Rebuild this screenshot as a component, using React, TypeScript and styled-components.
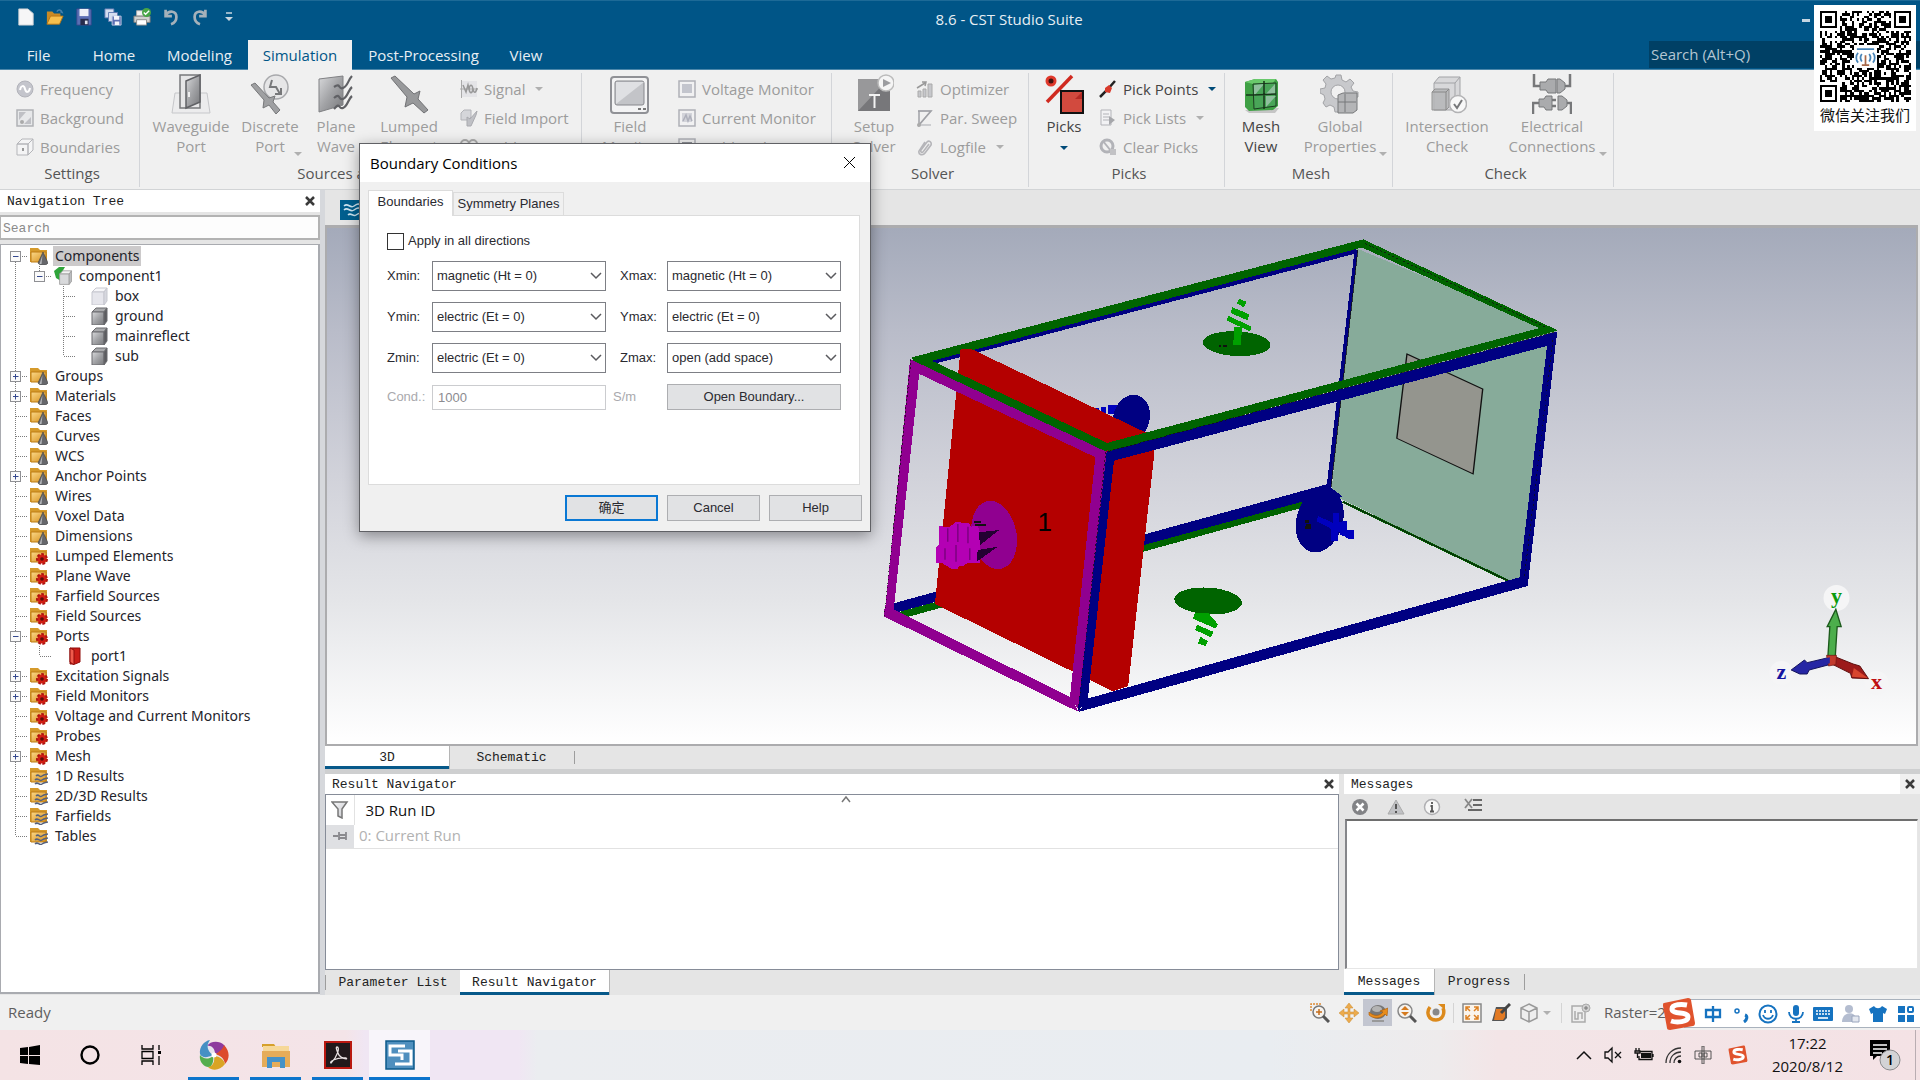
import React from "react";
import styled, { createGlobalStyle, css } from "styled-components";

/* ---------- tokens ---------- */

const ui = `"Open Sans", "Noto Sans", "Noto Sans CJK SC", sans-serif`;
const treeFont = `"Noto Sans", "Open Sans", sans-serif`;
const dialogFont = `"Liberation Sans", "Noto Sans CJK SC", sans-serif`;
const mono = `"Liberation Mono", "DejaVu Sans Mono", monospace`;
const blue = "#005587";

const GlobalStyle = createGlobalStyle`
  *, *::before, *::after { box-sizing: border-box; }
  body { margin: 0; background: #f0f0f0; overflow: hidden; }
  button, input, select { font: inherit; color: inherit; margin: 0; }
  button { padding: 0; border: 0; background: none; cursor: default; }
  svg { display: block; flex: none; }
`;

const Page = styled.div`
  position: relative;
  display: flex;
  flex-direction: column;
  height: 100vh;
  font-family: ${ui};
  font-size: 15px;
  color: #333;
`;

/* ---------- title bar and tabs ---------- */

const TitleBar = styled.header`
  background: ${blue};
  border-top: 1px solid #1d6a97;
  height: 70px;
  color: #e8eff4;
  display: flex;
  flex-direction: column;
`;
const TitleRow = styled.div`
  display: flex;
  align-items: center;
  height: 39px;
  padding: 0 110px 0 16px;
`;
const QuickAccess = styled.div`
  display: flex;
  align-items: center;
  gap: 9px;
  width: 224px;
  height: 32px;
  align-self: start;
`;
const QuickButton = styled.button`
  display: flex;
  justify-content: center;
  width: 20px;
`;
const AppTitle = styled.h1`
  flex: 1;
  margin: 0;
  padding-bottom: 3px;
  text-align: center;
  font-size: 15px;
  font-weight: 400;
  line-height: 20px;
`;
const MinimizeButton = styled.button`
  width: 8px;
  height: 3px;
  margin-left: 24px;
  background: #c5d6e2;
`;
const TabRow = styled.nav`
  display: flex;
  align-items: stretch;
  height: 30px;
  border-bottom: 1px solid #4b87aa;
`;
const RibbonTab = styled.button<{ $w: number; $active?: boolean }>`
  width: ${(p) => p.$w}px;
  line-height: 29px;
  height: 30px;
  ${(p) => p.$active && css`background: #f0f0f0; color: ${blue};`}
`;
const TabSpacer = styled.div`
  flex: 1;
`;
const RibbonSearch = styled.input`
  width: 271px;
  height: 27px;
  margin-top: 1px;
  border: 0;
  padding: 0 2px 2px;
  background: #004065;
  color: #c8d6df;
  outline: 0;
  &::placeholder { color: #b4c6d2; opacity: 1; }
`;

/* ---------- ribbon ---------- */

const Ribbon = styled.section`
  display: flex;
  height: 120px;
  padding-top: 3px;
  background: #f0f0f0;
  border-bottom: 1px solid #d2d4d6;
`;
const Group = styled.div<{ $w: number }>`
  position: relative;
  display: flex;
  flex-direction: column;
  width: ${(p) => p.$w}px;
  height: 114px;
  border-right: 1px solid #d3d5d9;
`;
const GroupBody = styled.div`
  display: flex;
  height: 90px;
  padding: 1px 0 0 8px;
`;
const GroupLabel = styled.div`
  padding-left: 5px;
  text-align: center;
  line-height: 20px;
  color: #555;
`;
const BigButton = styled.button<{ $w: number; $on?: boolean }>`
  position: relative;
  display: flex;
  flex-direction: column;
  align-items: center;
  justify-content: flex-start;
  width: ${(p) => p.$w}px;
  height: 84px;
  line-height: 20px;
  white-space: nowrap;
  color: ${(p) => (p.$on ? "#444" : "#9c9c9c")};
  svg { margin-bottom: 2px; }
`;
const CornerCaret = styled.span`
  position: absolute;
  right: 4px;
  bottom: 2px;
`;
const SmallColumn = styled.div`
  display: flex;
  flex-direction: column;
  padding-left: 8px;
`;
const SmallButton = styled.button<{ $on?: boolean }>`
  display: flex;
  align-items: center;
  gap: 6px;
  height: 29px;
  line-height: 20px;
  white-space: nowrap;
  color: ${(p) => (p.$on ? "#444" : "#9c9c9c")};
`;
const Caret = styled.span<{ $dark?: boolean; $place?: "corner" | "below" }>`
  display: block;
  border: 4px solid transparent;
  border-top-color: ${(p) => (p.$dark ? "#004a78" : "#b0b0b0")};
  border-bottom: 0;
  margin: ${(p) => (p.$place === "corner" ? "0" : p.$place === "below" ? "10px 4px 0" : "0 4px")};
`;

/* ---------- workspace ---------- */

const Workspace = styled.main`
  flex: 1;
  min-height: 0;
  display: flex;
  background: #e5e5e5;
`;
const NavPane = styled.aside`
  width: 320px;
  display: flex;
  flex-direction: column;
  padding-bottom: 1px;
`;
const PaneHeader = styled.div<{ $tall?: boolean }>`
  display: flex;
  align-items: center;
  justify-content: space-between;
  height: ${(p) => (p.$tall ? 22 : 20)}px;
  padding-left: 7px;
  background: #fff;
  font: 13px/20px ${mono};
  color: #222;
  > span { padding-top: 2px; }
`;
const CloseButton = styled.button<{ $tint?: boolean }>`
  display: flex;
  align-items: center;
  justify-content: center;
  align-self: stretch;
  width: 20px;
  background: ${(p) => (p.$tint ? "#f0f0f0" : "transparent")};
`;
const NavSearch = styled.input`
  margin: 3px 0 4px;
  height: 25px;
  padding: 2px 2px 0;
  border: 2px solid #b3b3b3;
  border-left-width: 1px;
  background: #fdfdfd;
  font: 13px/20px ${mono};
  outline: 0;
  &::placeholder { color: #8a8a8a; opacity: 1; }
`;
const TreeBox = styled.ul`
  flex: 1;
  min-height: 0;
  margin: 0;
  padding: 1px 0 0 3px;
  list-style: none;
  background: #fff;
  border: 1px solid #a9abb0;
  border-width: 1px 2px 2px 1px;
  font: 14px/20px ${treeFont};
  color: #23232b;
  overflow: hidden;
`;
const TreeRow = styled.li<{ $deep?: boolean }>`
  display: flex;
  height: 20px;
  align-items: center;
  > span:last-child { margin-left: 5px; }
  > svg:last-of-type { margin-left: ${(p) => (p.$deep ? 14 : 2)}px; }
`;
const TreeLabel = styled.span<{ $sel?: boolean }>`
  padding: 0 2px;
  white-space: nowrap;
  background: ${(p) => (p.$sel ? "#cccacb" : "transparent")};
`;
const GuideSlot = styled.span`
  display: block;
  width: 24px;
  height: 20px;
`;
const ExpandButton = styled.button`
  width: 24px;
  height: 20px;
`;
const Gutter = styled.div`
  width: 5px;
  background: #d6d8dc;
`;
const Center = styled.div`
  flex: 1;
  min-width: 0;
  display: flex;
  flex-direction: column;
`;
const DocStrip = styled.div`
  display: flex;
  height: 35px;
  padding: 10px 15px 5px;
`;
const DocTab = styled.button`
  width: 60px;
  height: 20px;
  background: #005f8f;
`;
const Viewport = styled.div`
  flex: 1;
  min-height: 0;
  margin-right: 2px;
  border: 2px solid #acacae;
  border-top-width: 3px;
  background: linear-gradient(#a4aaba 0%, #b9bcc9 20%, #d1d2da 48%, #e4e5e8 72%, #fff 100%);
  overflow: hidden;
`;
const SceneSvg = styled.svg`
  width: 100%;
  height: 100%;
`;
const TabStrip = styled.div<{ $h: number }>`
  display: flex;
  align-items: stretch;
  height: ${(p) => p.$h}px;
  font: 13px/18px ${mono};
  color: #222;
`;
const PaneTab = styled.button<{ $w: number; $active?: boolean }>`
  width: ${(p) => p.$w}px;
  padding-top: 3px;
  border-bottom: 3px solid transparent;
  ${(p) =>
    p.$active &&
    css`
      background: #fff;
      border-bottom-color: #07598a;
      box-shadow: 1px 0 #b5b5b5;
    `}
`;
const TabRule = styled.span`
  width: 1px;
  margin: 5px 0;
  background: #9d9d9d;
`;
const HSplit = styled.div`
  height: 5px;
  background: #cecfd0;
`;
const Docks = styled.div`
  display: grid;
  grid-template-columns: minmax(0, 1fr) 576px;
  column-gap: 5px;
  height: 221px;
`;
const Dock = styled.section`
  display: flex;
  flex-direction: column;
  min-width: 0;
`;
const ResultBox = styled.div`
  flex: 1;
  background: #fff;
  border: 1px solid #868c98;
`;
const ResultTable = styled.table`
  width: 100%;
  border-collapse: collapse;
  table-layout: fixed;
  th, td { padding: 0 5px; text-align: left; font-weight: 400; line-height: 20px; }
  th { position: relative; height: 30px; padding-left: 11px; color: #111; }
  td { height: 23px; padding-bottom: 2px; color: #b2b2b2; border-bottom: 1px solid #e2e2e2; }
  th:first-child { padding: 0 5px; width: 28px; border-right: 1px solid #e2e2e2; }
  td:first-child { padding: 0 6px; background: #dfe0e3; }
`;
const SortMark = styled.svg`
  position: absolute;
  left: 50%;
  top: 0;
  margin-left: -5px;
`;
const MessageTools = styled.div`
  display: flex;
  align-items: center;
  gap: 18px;
  height: 25px;
  padding: 0 7px;
`;
const MessageBox = styled.div`
  flex: 1;
  margin: 0 2px 0 1px;
  background: #fff;
  border: 1px solid #e6e6e6;
  border-top: 2px solid #6e6e6e;
  border-left: 2px solid #85868a;
`;

/* ---------- status bar ---------- */

const StatusBar = styled.footer`
  display: flex;
  align-items: center;
  height: 35px;
  padding-left: 8px;
  background: #f0f0f0;
  color: #5e5e5e;
  line-height: 20px;
  > span { padding-bottom: 2px; }
`;
const StatusTools = styled.div`
  display: flex;
  align-items: center;
  margin-left: auto;
  width: 615px;
`;
const StatusButton = styled.button<{ $w?: number; $active?: boolean }>`
  display: flex;
  align-items: center;
  justify-content: center;
  width: ${(p) => p.$w ?? 29}px;
  height: 27px;
  background: ${(p) => (p.$active ? "#c3c6d0" : "transparent")};
`;
const StatusRule = styled.span`
  width: 1px;
  height: 20px;
  margin: 0 3px;
  background: #d4d4d4;
`;
const RasterText = styled.span`
  margin-left: 8px;
  padding-bottom: 2px;
`;
const ImeBar = styled.div`
  position: absolute;
  right: 0;
  bottom: 51px;
  display: flex;
  align-items: center;
  height: 31px;
  width: 258px;
`;
const ImeStrip = styled.div`
  display: flex;
  flex: 1;
  align-items: center;
  justify-content: space-between;
  height: 29px;
  margin-left: -12px;
  padding: 0 4px 0 18px;
  background: #fff;
  border: 1px solid #a9b2bd;
  border-right: 0;
  color: #1673c0;
`;
const ImeButton = styled.button`
  display: flex;
  align-items: center;
  justify-content: center;
  width: 20px;
  height: 24px;
`;
const ImeLogo = styled.span`
  position: relative;
  z-index: 1;
`;

/* ---------- taskbar ---------- */

const Taskbar = styled.footer`
  display: flex;
  height: 50px;
  background: linear-gradient(90deg, #f4e3e5 0, #f4e4e8 18%, #f0e6f3 19%, #f0e6f3 27%, #ebedf0 28%, #e9edf1 66%, #eeebec 75%, #f3e5e7 78%, #f4e2e5 100%);
  color: #111;
`;
const TaskButton = styled.button<{ $w: number; $open?: boolean; $active?: boolean }>`
  display: flex;
  align-items: center;
  justify-content: center;
  width: ${(p) => p.$w}px;
  background: ${(p) => (p.$active ? "#f8f5fa" : "transparent")};
  ${(p) =>
    p.$open &&
    css`
      background-image: linear-gradient(#0c75cc, #0c75cc);
      background-repeat: no-repeat;
      background-position: center bottom;
      background-size: ${p.$active ? "100%" : "51px"} 3px;
    `}
`;
const Tray = styled.div`
  display: flex;
  align-items: center;
  margin-left: auto;
`;
const TrayButton = styled.button<{ $w: number }>`
  display: flex;
  justify-content: center;
  width: ${(p) => p.$w}px;
`;
const Clock = styled.time`
  width: 95px;
  font-size: 15px;
  line-height: 23px;
  text-align: center;
`;
const DesktopEdge = styled.span`
  width: 5px;
  align-self: stretch;
  border-left: 1px solid #b9adb2;
`;

/* ---------- QR card ---------- */

const QrCard = styled.aside`
  position: absolute;
  top: 5px;
  right: 4px;
  width: 102px;
  height: 126px;
  padding: 6px 5px;
  background: #fff;
  display: flex;
  flex-direction: column;
  align-items: center;
  font: 15px/26px "Noto Sans CJK SC", sans-serif;
  color: #111;
  white-space: nowrap;
`;

/* ---------- dialog ---------- */

const Dialog = styled.section`
  position: absolute;
  left: 359px;
  top: 143px;
  width: 512px;
  height: 389px;
  display: flex;
  flex-direction: column;
  border: 1px solid #606165;
  background: #f0f0f0;
  box-shadow: 0 4px 14px rgba(0, 0, 0, 0.38);
  font: 13px/18px ${dialogFont};
  color: #2a2a30;
`;
const DialogTitle = styled.div`
  display: flex;
  align-items: center;
  justify-content: space-between;
  height: 38px;
  padding: 0 14px 1px 10px;
  background: #fff;
  font: 15px/20px ${ui};
  color: #000;
`;
const DialogTabs = styled.div`
  display: flex;
  align-items: flex-end;
  height: 33px;
  padding-left: 8px;
  position: relative;
  z-index: 1;
`;
const DialogTab = styled.button<{ $w: number; $active?: boolean }>`
  width: ${(p) => p.$w}px;
  height: ${(p) => (p.$active ? 26 : 23)}px;
  border: 1px solid #dcdcdc;
  border-bottom: 0;
  background: ${(p) => (p.$active ? "#fff" : "#f0f0f0")};
  margin-bottom: ${(p) => (p.$active ? -1 : 0)}px;
  padding-bottom: ${(p) => (p.$active ? 3 : 0)}px;
`;
const DialogPage = styled.div`
  height: 270px;
  margin: 0 10px 0 8px;
  padding: 16px 18px;
  background: #fff;
  border: 1px solid #dcdcdc;
`;
const CheckLabel = styled.label`
  display: flex;
  align-items: center;
  gap: 4px;
  height: 18px;
  margin-bottom: 11px;
`;
const CheckBox = styled.input`
  appearance: none;
  width: 17px;
  height: 17px;
  border: 1px solid #333;
  background: #fff;
`;
const FieldGrid = styled.div`
  display: grid;
  grid-template-columns: 45px 174px 61px 174px;
  row-gap: 11px;
  align-items: center;
`;
const FieldLabel = styled.label<{ $right?: boolean; $dim?: boolean }>`
  padding-left: ${(p) => (p.$right ? 14 : 0)}px;
  color: ${(p) => (p.$dim ? "#a9a9ad" : "inherit")};
`;
const Unit = styled.span`
  padding-left: 7px;
  color: #a9a9ad;
`;
const SelectWrap = styled.span`
  display: grid;
  align-items: center;
  > * { grid-area: 1 / 1; }
  svg { justify-self: end; margin-right: 4px; pointer-events: none; }
`;
const Select = styled.select`
  appearance: none;
  width: 100%;
  height: 30px;
  padding: 0 4px;
  border: 1px solid #7d7f85;
  border-radius: 0;
  background: #fff;
`;
const CondInput = styled.input`
  width: 174px;
  height: 25px;
  padding: 0 5px;
  border: 1px solid #cbcccf;
  background: #fff;
  color: #8b8b90;
`;
const PushButton = styled.button<{ $primary?: boolean }>`
  height: 26px;
  background: #e1e2e4;
  border: ${(p) => (p.$primary ? "2px solid #0a78d4" : "1px solid #adaeb1")};
`;
const DialogActions = styled.div`
  display: grid;
  grid-template-columns: repeat(3, 93px);
  gap: 9px;
  justify-content: end;
  padding: 10px 8px 0 0;
`;

/* ---------- icons ---------- */

const HiddenDefs = styled.svg`
  position: absolute;
`;

const Defs = () => (
  <HiddenDefs width="0" height="0" aria-hidden="true">
    <defs>
      <linearGradient id="gGrey" x1="0" y1="0" x2="1" y2="1">
        <stop offset="0" stopColor="#d8d9db" />
        <stop offset="0.5" stopColor="#a2a3a6" />
        <stop offset="1" stopColor="#77787b" />
      </linearGradient>
      <linearGradient id="gLight" x1="0" y1="0" x2="1" y2="1">
        <stop offset="0" stopColor="#f8f8f9" />
        <stop offset="1" stopColor="#c4c5ca" />
      </linearGradient>
      <linearGradient id="gGold" x1="0" y1="0" x2="1" y2="1">
        <stop offset="0" stopColor="#fbd98a" />
        <stop offset="1" stopColor="#d68e18" />
      </linearGradient>
    </defs>
  </HiddenDefs>
);

const Icon = ({ s = 18, v, children }: { s?: number; v?: number; children: React.ReactNode }) => (
  <svg width={s} height={s} viewBox={`0 0 ${v ?? s} ${v ?? s}`} fill="none" aria-hidden="true">
    {children}
  </svg>
);

const quickIcons: [string, React.ReactNode][] = [
  ["New", <path d="M2 1h10l6 5v13H2z" fill="#f6f6f7" stroke="#c9ced3" />],
  ["Open", <>
    <path d="M1 4h6l2 2h7v4H5l-4 8z" fill="#c98a25" />
    <path d="M1 18l4-9h14l-4 9z" fill="#f6bf4d" stroke="#b87513" />
    <path d="M12 4c2-3 5-2 6 1l-2-1" stroke="#4680ac" strokeWidth="1.5" />
  </>],
  ["Save", <>
    <path d="M2 1h15l1 1v17H2z" fill="#5b6fb4" stroke="#38488c" />
    <path d="M5 1h10v8H5z" fill="#eef1f8" />
    <path d="M6 12h9v7H6z" fill="#262c4c" /><path d="M11 14h3v4h-3z" fill="#e2e6f1" />
  </>],
  ["Save all", <>
    <path d="M1 1h10v10H1z" fill="#d4def0" stroke="#5c78b0" />
    <path d="M5 5h10v10H5z" fill="#d4def0" stroke="#5c78b0" />
    <path d="M9 9h10v10H9z" fill="#5b6fb4" stroke="#c1cbe1" /><path d="M11 9h6v4h-6zM12 15h5v4h-5z" fill="#f3f5fa" />
  </>],
  ["Print", <>
    <path d="M4 3h9v6H4z" fill="#f2f2f2" stroke="#aaa" />
    <path d="M1 9h18v7H1z" fill="#d0d0ce" stroke="#777" /><path d="M4 13h11v6H4z" fill="#fff" stroke="#888" />
    <circle cx="15" cy="5" r="5" fill="#48a546" /><path d="M12 5l2 2 4-4" stroke="#fff" strokeWidth="1.5" />
  </>],
  ["Undo", <path d="M4 2v7h7M4 8c4-6 12-5 12 2 0 4-3 7-6 8" stroke="#a5b1ba" strokeWidth="3" />],
  ["Redo", <path d="M16 2v7H9M16 8C12 2 4 3 4 10c0 4 3 7 6 8" stroke="#a5b1ba" strokeWidth="3" />],
];

const cube = (a: string, b: string, c: string, line: string) => (
  <>
    <path d="M2 5l4-4h11l-3 4z" fill={a} stroke={line} />
    <path d="M2 5h12v13H2z" fill={b} stroke={line} />
    <path d="M14 5l3-4v13l-3 4z" fill={c} stroke={line} />
  </>
);

const smallIcons: Record<string, React.ReactNode> = {
  Frequency: <><circle cx="9" cy="9" r="8" fill="#c4c5cc" stroke="#b2b3ba" /><path d="M4 10c1-5 4-5 5-1s4 4 5-1" stroke="#fff" strokeWidth="2" /></>,
  Background: <><path d="M1 1h16v16H1z" fill="#e7e8ea" stroke="#b0b1b5" strokeWidth="1.5" /><path d="M3 3h7l-7 8zM15 8v7H8z" fill="#bfc0c5" /><circle cx="6" cy="13" r="2" fill="#aaa" /></>,
  Boundaries: <><path d="M1 6l5-5h11l-5 5zM1 6h11v11H1zM12 6l5-5v11l-5 5z" fill="#f4f4f5" stroke="#b4b5b9" /><path d="M6 10h2v3H6z" fill="#999" /></>,
  Signal: <><path d="M1 1h16v16H1z" fill="#e4e4e7" /><path d="M1.500 0v18M0 9h18" stroke="#aaa" /><path d="M3 5l3 7 2-7 1 4c1-5 3-5 4 0s3 4 4-1M9 9c1 5 3 5 4 0" stroke="#999" strokeWidth="1.5" /></>,
  "Field Import": <><path d="M1 4l3-3h7v7l-3 3H1z" fill="#d5d6da" stroke="#b2b3b8" /><path d="M17 2l-7 8-3-2v9h4l5-11z" fill="#bfc0c5" stroke="#a9aaaf" /></>,
  "Field Source": <><circle cx="5" cy="6" r="4" stroke="#aaa" strokeWidth="2" /><circle cx="13" cy="6" r="4" stroke="#aaa" strokeWidth="2" /><path d="M3 10v7h12v-7" fill="#ccc" /></>,
  "Voltage Monitor": <><path d="M1 1h16v16H1z" fill="#f1f1f2" stroke="#aeb0b6" strokeWidth="1.5" /><path d="M4 4h10v9H4z" fill="#c3c5cd" /></>,
  "Current Monitor": <><path d="M1 1h16v16H1z" fill="#f1f1f2" stroke="#aeb0b6" strokeWidth="1.5" /><path d="M4 4h10v9H4z" fill="#d3d4da" /><path d="M5 12l3-6 2 6 2-5 2 5" stroke="#aeb0bb" strokeWidth="1.5" /></>,
  "Field Probe": <><path d="M1 1h16v16H1z" fill="#eee" stroke="#aeb0b6" strokeWidth="1.5" /><path d="M4 4h10v9H4z" fill="#8e9097" /></>,
  Optimizer: <><path d="M2 11h3v6H2zM7 9h3v8H7zM12 4h4v13h-4z" fill="#c6c7cb" stroke="#aaa" /><path d="M1 8l8-5M6 2l4 0-1 4" stroke="#999" strokeWidth="1.5" /></>,
  "Par. Sweep": <><path d="M2 2h13L3 16h12" stroke="#c0c1c5" strokeWidth="1.5" /><path d="M2 2h13L3 16V2" stroke="#a0a1a6" strokeWidth="1.5" /><circle cx="3" cy="16" r="2" fill="#aaa" /></>,
  Logfile: <path d="M13 6l-6 8c-1 1-3 0-2-2l6-8c2-2 5 0 4 3l-6 8c-2 3-7 2-6-2l6-9" stroke="#b5b5b9" strokeWidth="1.6" />,
  "Pick Points": <><path d="M1 17L9 9l7-8" stroke="#222" strokeWidth="2.5" /><path d="M6 8l4-3 3 3-2 5-5-1z" fill="#d93a2b" /></>,
  "Pick Lists": <><path d="M2 1h10v15H2z" fill="#f2f2f4" stroke="#b2b3b8" /><path d="M4 5h6M4 8h6M4 11h6" stroke="#b2b3b8" /><path d="M10 7l6 4-6 5z" fill="#a6a7ab" /></>,
  "Clear Picks": <><circle cx="8" cy="8" r="6" stroke="#b2b3b8" strokeWidth="3" /><path d="M4 3l8 10" stroke="#b2b3b8" strokeWidth="2" /><path d="M11 11h6v6h-6z" fill="#c2c2c5" /></>,
};

const bigIcons: Record<string, React.ReactNode> = {
  waveguide: <><path d="M4 19h32l3 20H1z" fill="#ececed" stroke="#c6c7ca" /><path d="M9 1h20v33H9z" fill="#e6e6e7" stroke="#77787b" strokeWidth="1.5" /><path d="M15 7l14-6v27l-14 6z" fill="url(#gGrey)" stroke="#606165" strokeWidth="1.5" /><path d="M18 18v5" stroke="#eee" strokeWidth="2" /></>,
  discrete: <><circle cx="26" cy="13" r="12" fill="#e6e6e7" stroke="#a8a9ac" strokeWidth="1.5" /><path d="M22 6l-2 7h6l4 7m-5 0h6v-6" stroke="#77787a" strokeWidth="2" /><path d="M1 11l4-2 14 15 6-2-2 6 7 8-4 4-7-9-6 3 1-8z" fill="#9fa0a2" stroke="#77787a" /></>,
  plane: <><path d="M3 5l24-3v29L3 38z" fill="url(#gGrey)" stroke="#808184" /><path d="M18 13c7-5 4 3 9 1s5-8 9-12M18 24c7-6 4 3 9 1s5-9 9-12M18 35c7-8 4 1 9-1s5-9 9-12" stroke="#606165" strokeWidth="2.2" /></>,
  lumped: <path d="M2 4l4-2 19 18 6-3-2 8 10 11-4 3-11-10-8 4 2-10z" fill="#98999b" stroke="#717275" />,
  monitor: <><rect x="1" y="3" width="37" height="36" rx="3" fill="#f3f3f4" stroke="#909196" strokeWidth="2" /><rect x="5" y="7" width="29" height="24" rx="2" fill="#c3c4c8" stroke="#87888d" /><path d="M6 30V8h28z" fill="#dfe0e3" /><path d="M28 35h3m2 0h3" stroke="#777" strokeWidth="2" /></>,
  solver: <><path d="M4 5h32v32H4z" fill="#77777a" /><path d="M4 37V5h30z" fill="#98989a" /><path d="M15 21h11M20.500 21v13" stroke="#f2f2f2" strokeWidth="2" /><circle cx="32" cy="9" r="8" fill="#f5f5f5" stroke="#bbb" strokeWidth="1.500" /><path d="M29 5l8 4-8 4z" fill="#9c9da0" /></>,
  picks: <><path d="M3 28L28 2" stroke="#d02a20" strokeWidth="3.500" /><circle cx="7" cy="7" r="4" fill="#40120f" stroke="#e0392c" strokeWidth="3" /><path d="M17 17h22v22H17z" fill="#d24a3e" stroke="#111" strokeWidth="2" /><path d="M31 25l7-7v7z" fill="#b52a24" /></>,
  mesh: <><path d="M4 36l4 3h26l4-5z" fill="#999" opacity=".5" /><path d="M4 8l10-3h21l2 3v24l-5 4-24 1-4-4z" fill="#3fa045" /><path d="M4 8l10-3h21l-4 5H12z" fill="#69c96b" /><path d="M12 10l23-1v23l-22 3z" fill="#49a558" stroke="#1b3b20" /><path d="M13 22V11l10-1zM25 33V22h10zM34 10v10h-9z" fill="#8fbf9d" /><path d="M23 7v28M5 21h7l23-1" stroke="#163519" strokeWidth="1.500" /></>,
  global: <><path d="M16 1h5l1 5 4 2 4-3 4 4-3 4 2 4 5 1v5l-5 1-2 4 2 5-5 3-3-4-4 1-2 5h-4l-1-5-4-2-4 2-3-4 2-4-1-4-4-2V15l5-1 1-4-3-4 4-4 4 3 4-1z" fill="#c8c9cc" stroke="#a2a3a6" /><circle cx="18" cy="18" r="7" fill="#f0f0f0" stroke="#a2a3a6" /><path d="M18 21l5-2h14v17l-4 3H18z" fill="#b4b5b7" stroke="#77787a" /><path d="M25 20v18M18 28h18" stroke="#77787a" /></>,
  intersection: <><path d="M7 9l5-6h21v26l-5 7H7z" fill="#d8d8da" stroke="#a2a3a6" /><path d="M7 9h21v25M28 9l5-6" stroke="#a2a3a6" /><path d="M5 18l3-3h14v18l-3 3H5z" fill="#b5b6b8" stroke="#888" opacity=".85" /><path d="M5 18h14v18M19 18l3-3" stroke="#888" /><circle cx="31" cy="30" r="8.500" fill="#f8f8f8" stroke="#b2b2b4" strokeWidth="1.500" /><path d="M27 30l3 4 5-8" stroke="#77787a" strokeWidth="2" /></>,
  electrical: <><path d="M2 0v12h7M38 0v12h-7M1 40V29h7M39 40V29h-6" stroke="#77787a" strokeWidth="2.500" /><path d="M8 8h6l2-3h8v14h-8l-2-3H8zM25 5h3l5 4v6l-5 4h-3z" fill="#aaabad" stroke="#77787a" /><path d="M7 25h5l2-3h6v14h-6l-2-3H7zM26 22h4l5 4v6l-5 4h-4z" fill="#aaabad" stroke="#77787a" /><path d="M20 26h4M20 32h4" stroke="#77787a" strokeWidth="2.500" /></>,
};

const folder = (
  <>
    <path d="M0 1h8l2 2h7v12H0z" fill="#d59a2b" />
    <path d="M1 5h15v10H1z" fill="url(#gGold)" stroke="#bd7d14" />
  </>
);
const treeIcons: Record<string, React.ReactNode> = {
  cone: <>{folder}<path d="M13 5l5 11c-2 3-8 3-10 0z" fill="#66676b" stroke="#3e3f42" strokeWidth=".6" /><path d="M12.500 8l-1 9h-2z" fill="#b5b7bb" /></>,
  gear: <>{folder}<circle cx="12" cy="12" r="4.500" fill="#e2281d" stroke="#b01210" strokeWidth="3" strokeDasharray="2.500 1.500" /><circle cx="12" cy="12" r="4" fill="#cf1d15" /><circle cx="12" cy="12" r="1.800" fill="#5b0d08" /></>,
  wave: <>{folder}<path d="M6 9c3-3 3 2 6 0s3-1 6-2M5 13c3-3 4 2 7 0s3-1 6-2M5 17c3-3 4 2 7 0s3-1 6-2" stroke="#55617c" strokeWidth="1.500" /></>,
  comp: <><path d="M0 4l5-4h6l-3 5-1 9-5-3z" fill="#2fa43a" /><g transform="translate(4 3) scale(.8)">{cube("#f4f4f4", "#d8d9db", "#bcbdc0", "#999")}</g></>,
  ghost: cube("#f6f6f9", "#e6e6ec", "#d6d7de", "#c6c7cf"),
  solid: cube("#a9aaac", "url(#gGrey)", "#5c5d60", "#6a6b6e"),
  port: <><path d="M4 1h10v14l-5 2H4z" fill="#c91d17" stroke="#8f0d0a" /><path d="M4 1l4 2v15l-4-3z" fill="#f05b4c" stroke="#8f0d0a" /></>,
};

const statusIcons: Record<string, React.ReactNode> = {
  zoomBox: <><path d="M1 8V1h11" stroke="#dd8b35" strokeDasharray="2 1" strokeWidth="1.500" /><circle cx="9" cy="9" r="6" fill="#f6f3ef" stroke="#777" strokeWidth="1.500" /><path d="M6 9h6M9 6v6" stroke="#c56e1c" strokeWidth="1.500" /><path d="M13 13l6 6" stroke="#555" strokeWidth="3" /></>,
  pan: <path d="M10 0l4 5h-3v4h4V6l5 4-5 4v-3h-4v4h3l-4 5-4-5h3v-4H5v3l-5-4 5-4v3h4V5H6z" fill="#ecab4d" stroke="#c98a30" strokeWidth=".5" />,
  rotate: <><ellipse cx="10" cy="9" rx="8" ry="7" fill="#777" /><ellipse cx="9" cy="6" rx="5" ry="3" fill="#b4b4b4" /><path d="M1 9c5 5 11 4 14 0l-3-1 8-3-1 8-2-2c-4 5-12 5-16 1z" fill="#e88c1c" stroke="#a95d0a" strokeWidth=".6" /><path d="M4 18h12" stroke="#999" strokeWidth="2" /></>,
  zoomDyn: <><circle cx="8" cy="8" r="7" fill="#f6f3ef" stroke="#888" strokeWidth="1.500" /><path d="M4 7l4-4 4 4zM4 9l4 4 4-4z" fill="#d57a1e" /><path d="M13 13l6 6" stroke="#555" strokeWidth="3" /></>,
  spin: <><path d="M4 4c-4 5-2 13 6 13 7 0 9-7 7-12" stroke="#dc8a1c" strokeWidth="3.500" /><path d="M12 1h7v6z" fill="#dc8a1c" /><circle cx="10" cy="9" r="3.500" fill="#888" /></>,
  fit: <><path d="M1 1h18v18H1z" fill="#faf4ec" stroke="#888" strokeWidth="1.500" /><path d="M4 8V4h4M16 8V4h-4M4 12v4h4M16 12v4h-4M4 4l4 4M16 4l-4 4M4 16l4-4M16 16l-4-4" stroke="#dd8123" strokeWidth="1.500" /></>,
  plane: <><path d="M5 4h11v11L13 18H1z" fill="#555" /><path d="M5 6h9v8l-2 3H3z" fill="#e27a24" /><path d="M10 10L19 1" stroke="#444" strokeWidth="3" /></>,
  box: <path d="M10 1l8 4v10l-8 4-8-4V5zM2 5l8 4 8-4M10 9v10" fill="#eee" stroke="#999" strokeWidth="1.500" />,
  raster: <><path d="M1 3h13v16H1z" fill="#eee" stroke="#aaa" strokeWidth="1.500" /><path d="M4 8v8h3v-6h4v6" stroke="#aaa" strokeWidth="1.500" /><circle cx="15" cy="5" r="4" fill="#d0d0d0" stroke="#aaa" /><path d="M13 5h4M15 3v4" stroke="#777" /></>,
};

const SogouLogo = ({ s }: { s: number }) => (
  <svg width={s} height={s} viewBox="0 0 34 34" fill="none" aria-hidden="true">
    <path d="M2 6L26 1c2 0 3 1 3 2l4 23c0 2-1 3-2 3L8 33c-2 0-3-1-3-2L1 9c0-2 0-3 1-3z" fill="#e0532d" />
    <path d="M25 8c-5-1-15-1-15 4 0 6 16 2 16 8 0 5-11 6-17 4" stroke="#fff" strokeWidth="5" />
  </svg>
);

const CloseX = () => (
  <svg width="10" height="10" viewBox="0 0 10 10" aria-hidden="true">
    <path d="M1 1l8 8M9 1L1 9" stroke="#3a3a3a" strokeWidth="2.500" />
  </svg>
);

/* ---------- ribbon data ---------- */

type Big = { w: number; icon: string; lines: string[]; caret?: boolean; on?: boolean };
type Small = { label: string; caret?: boolean; on?: boolean };
const groups: { label: string; w: number; big: Big[]; small: Small[] }[] = [
  { label: "Settings", w: 140, big: [], small: [{ label: "Frequency" }, { label: "Background" }, { label: "Boundaries" }] },
  {
    label: "Sources and Loads", w: 442,
    big: [
      { w: 86, icon: "waveguide", lines: ["Waveguide", "Port"] },
      { w: 72, icon: "discrete", lines: ["Discrete", "Port"], caret: true },
      { w: 60, icon: "plane", lines: ["Plane", "Wave"] },
      { w: 86, icon: "lumped", lines: ["Lumped", "Element"] },
    ],
    small: [{ label: "Signal", caret: true }, { label: "Field Import" }, { label: "Field Source" }],
  },
  {
    label: "Monitors", w: 250,
    big: [{ w: 80, icon: "monitor", lines: ["Field", "Monitor"] }],
    small: [{ label: "Voltage Monitor" }, { label: "Current Monitor" }, { label: "Field Probe" }],
  },
  {
    label: "Solver", w: 197,
    big: [{ w: 68, icon: "solver", lines: ["Setup", "Solver"] }],
    small: [{ label: "Optimizer" }, { label: "Par. Sweep" }, { label: "Logfile", caret: true }],
  },
  {
    label: "Picks", w: 196,
    big: [{ w: 54, icon: "picks", lines: ["Picks"], on: true }],
    small: [{ label: "Pick Points", caret: true, on: true }, { label: "Pick Lists", caret: true }, { label: "Clear Picks" }],
  },
  {
    label: "Mesh", w: 168,
    big: [
      { w: 56, icon: "mesh", lines: ["Mesh", "View"], on: true },
      { w: 102, icon: "global", lines: ["Global", "Properties"], caret: true },
    ],
    small: [],
  },
  {
    label: "Check", w: 221,
    big: [
      { w: 92, icon: "intersection", lines: ["Intersection", "Check"] },
      { w: 118, icon: "electrical", lines: ["Electrical", "Connections"], caret: true },
    ],
    small: [],
  },
];

/* ---------- tree data ---------- */

type Node = { label: string; icon: string; depth: number; box?: "+" | "-"; last?: boolean; first?: boolean; sel?: boolean };
const tree: Node[] = [
  { label: "Components", icon: "cone", depth: 0, box: "-", first: true, sel: true },
  { label: "component1", icon: "comp", depth: 1, box: "-", last: true },
  { label: "box", icon: "ghost", depth: 2 },
  { label: "ground", icon: "solid", depth: 2 },
  { label: "mainreflect", icon: "solid", depth: 2 },
  { label: "sub", icon: "solid", depth: 2, last: true },
  { label: "Groups", icon: "cone", depth: 0, box: "+" },
  { label: "Materials", icon: "cone", depth: 0, box: "+" },
  { label: "Faces", icon: "cone", depth: 0 },
  { label: "Curves", icon: "cone", depth: 0 },
  { label: "WCS", icon: "cone", depth: 0 },
  { label: "Anchor Points", icon: "cone", depth: 0, box: "+" },
  { label: "Wires", icon: "cone", depth: 0 },
  { label: "Voxel Data", icon: "cone", depth: 0 },
  { label: "Dimensions", icon: "cone", depth: 0 },
  { label: "Lumped Elements", icon: "gear", depth: 0 },
  { label: "Plane Wave", icon: "gear", depth: 0 },
  { label: "Farfield Sources", icon: "gear", depth: 0 },
  { label: "Field Sources", icon: "gear", depth: 0 },
  { label: "Ports", icon: "gear", depth: 0, box: "-" },
  { label: "port1", icon: "port", depth: 1, last: true },
  { label: "Excitation Signals", icon: "gear", depth: 0, box: "+" },
  { label: "Field Monitors", icon: "gear", depth: 0, box: "+" },
  { label: "Voltage and Current Monitors", icon: "gear", depth: 0 },
  { label: "Probes", icon: "gear", depth: 0 },
  { label: "Mesh", icon: "gear", depth: 0, box: "+" },
  { label: "1D Results", icon: "wave", depth: 0 },
  { label: "2D/3D Results", icon: "wave", depth: 0 },
  { label: "Farfields", icon: "wave", depth: 0 },
  { label: "Tables", icon: "wave", depth: 0, last: true },
];

const Guide = ({ up = true, down = true, across = true, box }: { up?: boolean; down?: boolean; across?: boolean; box?: "+" | "-" }) => (
  <svg width="24" height="20" viewBox="0 0 24 20" fill="none" aria-hidden="true">
    <g stroke="#7c7c7c" strokeDasharray="1 1">
      {up && <path d="M11.500 0v10" />}
      {down && <path d="M11.500 10v10" />}
      {across && <path d="M12 10.500h12" />}
    </g>
    {box && <rect x="6.500" y="5.500" width="10" height="10" fill="#fafafa" stroke="#8f9094" />}
    {box && <path d={box === "+" ? "M9 10.500h5.500M11.500 8v5.500" : "M9 10.500h5.500"} stroke="#34488f" />}
  </svg>
);

const TreeItem = ({ n }: { n: Node }) => (
  <TreeRow $deep={n.depth > 0 && !n.box}>
    {n.depth > 0 && <GuideSlot><Guide across={false} /></GuideSlot>}
    {n.depth > 1 && <GuideSlot />}
    {n.box ? (
      <ExpandButton aria-label={`Toggle ${n.label}`}><Guide up={!n.first} down={!n.last} box={n.box} /></ExpandButton>
    ) : (
      <GuideSlot><Guide down={!n.last} /></GuideSlot>
    )}
    <Icon>{treeIcons[n.icon]}</Icon>
    <TreeLabel $sel={n.sel}>{n.label}</TreeLabel>
  </TreeRow>
);

/* ---------- 3D scene ---------- */

const Scene = () => (
  <SceneSvg viewBox="327 228 1588 516" role="img" aria-label="Boundary box preview">
    <g transform="translate(860 220) scale(.4592 .33333)" shapeRendering="crispEdges">
      <path d="M1080 85L1515 335 1500 380 1450 1075 1405 1080 1025 822z" fill="#87ab9a" />
      <path d="M1190 402l165 105-21 255-166-107z" fill="#94958e" stroke="#111" strokeWidth="3" />
      <path d="M1076 90h7L1025 800h-10z" fill="#000082" />
      <path d="M1083 90L1025 800" stroke="#111" strokeWidth="2" />
      <path d="M1050 845L1410 1082" stroke="#005f00" strokeWidth="7" />
      <path d="M1050 845L1410 1082" stroke="#111" strokeWidth="2" />
      <path d="M72 1150L1015 793 1050 830 960 846 72 1180z" fill="#000082" />
      <path d="M84 1176L970 842v18L100 1192z" fill="#006400" />
      <path d="M150 422L1080 84v16L165 430z" fill="#000082" />
      <path d="M112 412L1095 58l5 22-20 7L130 432z" fill="#006400" />
      <path d="M1095 58l422 272-27 2L1088 80z" fill="#006400" />
      <path d="M1098 70L1505 330" stroke="#111" strokeWidth="2" strokeDasharray="5 5" />
      {/* rear arrows, partly hidden by the slab */}
      <path d="M505 565h14v16h-14zM523 560h12v22h-12zM540 556h18v26h-18z" fill="#0000be" />
      <ellipse cx="590" cy="594" rx="40" ry="70" transform="rotate(6 590 594)" fill="#000082" />
      {/* slab */}
      <path d="M218 388h25L640 650v50L583 1398l-33 16L162 1152z" fill="#b40000" />
      {/* top and bottom arrows */}
      <ellipse cx="819" cy="371" rx="74" ry="37" transform="rotate(4 819 371)" fill="#006400" />
      <path d="M813 322h18l-3 54h-16zM800 287l52 33-4 14-50-32zM810 262l37 21-4 18-37-22zM825 236l16 10-6 16-16-12z" fill="#00a000" />
      <path d="M780 376h6v5h-6zM790 376h9v5h-9z" fill="#111" />
      <ellipse cx="757" cy="1143" rx="74" ry="40" transform="rotate(6 757 1143)" fill="#006400" />
      <path d="M728 1178l30 2 20 32-4 14-50-30zM733 1214l36 22-6 16-34-22zM740 1250l17 14-6 14-16-8z" fill="#00a000" />
      {/* right side arrow */}
      <ellipse cx="1000" cy="900" rx="51" ry="98" transform="rotate(8 1000 900)" fill="#000082" />
      <path d="M996 888l32 20V880h14v26l18-4v28h15v26h-14l-6-8-10-2v-12l-6 2v28h-15v-38l-30-22z" fill="#0000be" />
      <path d="M967 900h10v8h-10zM970 912h10v14h-12z" fill="#111" />
      {/* front top edge */}
      <path d="M535 695L1517 335l-2 30-20 13L640 690 552 722z" fill="#000082" />
      <path d="M528 672L1490 320l27 12L540 694z" fill="#006400" />
      <path d="M540 694L1517 334" stroke="#111" strokeWidth="2" strokeDasharray="5 5" />
      <path d="M1517 335L1453 1098l-18-24L1495 378z" fill="#000082" />
      <path d="M1508 360L1445 1080" stroke="#111" strokeWidth="2" strokeDasharray="5 10" />
      <path d="M1435 1072l18-4v30L475 1476l19-40z" fill="#000082" />
      {/* port plane frame */}
      <path d="M110 418L535 695l-4 20-19-3L122 458z" fill="#900090" />
      <path d="M112 412l46 12L545 674l-10 21L115 422z" fill="#006400" />
      <path d="M108 418l20 42L72 1172l-20 16z" fill="#900090" />
      <path d="M52 1168l23 2L460 1434l15 42L52 1190z" fill="#900090" />
      <path d="M512 705l24-10L478 1476l-22-44z" fill="#900090" />
      <path d="M536 695l16 27L495 1437l-22 39z" fill="#000082" />
      <path d="M110 418L52 1188M534 697L474 1474" stroke="#111" strokeWidth="2" strokeDasharray="5 7" />
      {/* port arrow */}
      <ellipse cx="291" cy="945" rx="49" ry="103" transform="rotate(-6 291 945)" fill="#900090" />
      <path d="M172 918l20 4 16-16 28 4 4 10 16-2 4 20v90l-28 2-8 8h-10l-2 10h-12l-24-20h-12v-44l6-10z" fill="#b400b4" />
      <path d="M190 925v40M212 912v54M234 920v50M184 985v34M208 975v50M238 985v35" stroke="#78007c" strokeWidth="3" />
      <path d="M258 937l44-7-42 46zM255 990l44-10-45 44z" fill="#240032" />
      <path d="M247 902h16v6h-16zM250 913h24v6h-24z" fill="#111" />
    </g>
    <text x="1037" y="531" fontFamily="Liberation Sans, sans-serif" fontSize="26" fill="#000">1</text>
    {/* axis triad */}
    <g fill="#f5f5f6">
      <circle cx="1836" cy="598" r="13" /><circle cx="1781" cy="673" r="12" /><circle cx="1876" cy="683" r="12" />
    </g>
    <g transform="translate(1700 560) scale(.33333)">
      <path d="M398 288l60 24 20 6 26 38-50-2-4-14-60-30z" fill="#9c1a1a" stroke="#5c0d0d" strokeWidth="3" />
      <path d="M460 324l42 30-48-4z" fill="#d8452e" />
      <path d="M382 292l6-92h-8l26-52 16 52h-12l-6 94z" fill="#4cae4c" stroke="#1c5a1c" strokeWidth="4" />
      <path d="M388 292l-68 16-8-8-40 30 26 12h22l6-12 68-18z" fill="#2626a4" stroke="#14145c" strokeWidth="3" />
      <path d="M378 286h30l-2 28-22 4z" fill="#c23a2c" stroke="#6a1411" strokeWidth="2" />
      <path d="M388 292l-20 5v18l20-5z" fill="#2626a4" />
    </g>
    <g fontFamily="Liberation Serif, serif" fontWeight="700" fontSize="22" textAnchor="middle">
      <text x="1836" y="603" fill="#0c9a0c">y</text>
      <text x="1781" y="679" fill="#1414a0">z</text>
      <text x="1876" y="689" fill="#c01010">x</text>
    </g>
  </SceneSvg>
);

/* ---------- QR code ---------- */

const qrPath = (() => {
  const n = 37;
  let seed = 7919;
  let d = "";
  const cell = (x: number, y: number, w = 1, h = 1) => (d += `M${x} ${y}h${w}v${h}h-${w}z`);
  for (let y = 0; y < n; y++)
    for (let x = 0; x < n; x++) {
      seed = (seed * 1103515245 + 12345) % 2147483648;
      const corner = (x < 8 && y < 8) || (x > n - 9 && y < 8) || (x < 8 && y > n - 9);
      const logo = x > 13 && x < 23 && y > 13 && y < 23;
      if (!corner && !logo && seed / 2147483648 < 0.54) cell(x, y);
    }
  [[0, 0], [n - 7, 0], [0, n - 7]].forEach(([x, y]) => {
    cell(x, y, 7, 1); cell(x, y + 6, 7, 1); cell(x, y + 1, 1, 5); cell(x + 6, y + 1, 1, 5); cell(x + 2, y + 2, 3, 3);
  });
  return d;
})();

/* ---------- dialog pieces ---------- */

const DropDown = ({ id, value }: { id: string; value: string }) => (
  <SelectWrap>
    <Select id={id} defaultValue={value}>
      {["electric (Et = 0)", "magnetic (Ht = 0)", "open (add space)"].map((o) => <option key={o}>{o}</option>)}
    </Select>
    <svg width="12" height="8" viewBox="0 0 12 8" fill="none" aria-hidden="true">
      <path d="M1 1l5 5 5-5" stroke="#5a5a5e" strokeWidth="1.500" />
    </svg>
  </SelectWrap>
);

const axes: [string, string, string][] = [
  ["X", "magnetic (Ht = 0)", "magnetic (Ht = 0)"],
  ["Y", "electric (Et = 0)", "electric (Et = 0)"],
  ["Z", "electric (Et = 0)", "open (add space)"],
];

const BoundaryDialog = () => (
  <Dialog role="dialog" aria-label="Boundary Conditions">
    <DialogTitle>
      <span>Boundary Conditions</span>
      <button aria-label="Close">
        <svg width="13" height="13" viewBox="0 0 13 13"><path d="M1 1l11 11M12 1L1 12" stroke="#000" /></svg>
      </button>
    </DialogTitle>
    <DialogTabs>
      <DialogTab $w={85} $active>Boundaries</DialogTab>
      <DialogTab $w={111}>Symmetry Planes</DialogTab>
    </DialogTabs>
    <DialogPage>
      <CheckLabel><CheckBox type="checkbox" />Apply in all directions</CheckLabel>
      <FieldGrid>
        {axes.map(([a, lo, hi]) => (
          <React.Fragment key={a}>
            <FieldLabel htmlFor={`${a}min`}>{a}min:</FieldLabel>
            <DropDown id={`${a}min`} value={lo} />
            <FieldLabel htmlFor={`${a}max`} $right>{a}max:</FieldLabel>
            <DropDown id={`${a}max`} value={hi} />
          </React.Fragment>
        ))}
        <FieldLabel htmlFor="cond" $dim>Cond.:</FieldLabel>
        <CondInput id="cond" defaultValue="1000" disabled />
        <Unit>S/m</Unit>
        <PushButton>Open Boundary...</PushButton>
      </FieldGrid>
    </DialogPage>
    <DialogActions>
      <PushButton $primary>确定</PushButton>
      <PushButton>Cancel</PushButton>
      <PushButton>Help</PushButton>
    </DialogActions>
  </Dialog>
);

/* ---------- app ---------- */

export default function App() {
  return (
    <Page>
      <GlobalStyle />
      <Defs />
      <TitleBar>
        <TitleRow>
          <QuickAccess>
            {quickIcons.map(([name, art]) => (
              <QuickButton key={name} aria-label={name}><Icon s={18} v={20}>{art}</Icon></QuickButton>
            ))}
            <QuickButton aria-label="Customize">
              <svg width="8" height="10" viewBox="0 0 8 10"><path d="M1 1h6" stroke="#c9d7e1" strokeWidth="1.500" /><path d="M0 5h8L4 9z" fill="#c9d7e1" /></svg>
            </QuickButton>
          </QuickAccess>
          <AppTitle>8.6 - CST Studio Suite</AppTitle>
          <MinimizeButton aria-label="Minimize" />
        </TitleRow>
        <TabRow>
          <RibbonTab $w={77}>File</RibbonTab>
          <RibbonTab $w={74}>Home</RibbonTab>
          <RibbonTab $w={97}>Modeling</RibbonTab>
          <RibbonTab $w={104} $active>Simulation</RibbonTab>
          <RibbonTab $w={143}>Post-Processing</RibbonTab>
          <RibbonTab $w={62}>View</RibbonTab>
          <TabSpacer />
          <RibbonSearch aria-label="Search commands" placeholder="Search (Alt+Q)" />
        </TabRow>
      </TitleBar>

      <Ribbon>
        {groups.map((g) => (
          <Group key={g.label} $w={g.w}>
            <GroupBody>
              {g.big.map((b) => (
                <BigButton key={b.icon} $w={b.w} $on={b.on}>
                  <Icon s={40}>{bigIcons[b.icon]}</Icon>
                  {b.lines.map((l) => <span key={l}>{l}</span>)}
                  {b.lines.length === 1 && <Caret $dark $place="below" />}
                  {b.caret && <CornerCaret><Caret $place="corner" /></CornerCaret>}
                </BigButton>
              ))}
              {g.small.length > 0 && (
                <SmallColumn>
                  {g.small.map((s) => (
                    <SmallButton key={s.label} $on={s.on}>
                      <Icon>{smallIcons[s.label]}</Icon>
                      {s.label}
                      {s.caret && <Caret $dark={s.on} />}
                    </SmallButton>
                  ))}
                </SmallColumn>
              )}
            </GroupBody>
            <GroupLabel>{g.label}</GroupLabel>
          </Group>
        ))}
      </Ribbon>

      <Workspace>
        <NavPane>
          <PaneHeader $tall><span>Navigation Tree</span><CloseButton aria-label="Close tree"><CloseX /></CloseButton></PaneHeader>
          <NavSearch aria-label="Search tree" placeholder="Search" />
          <TreeBox>
            {tree.map((n) => <TreeItem key={n.label} n={n} />)}
          </TreeBox>
        </NavPane>
        <Gutter />
        <Center>
          <DocStrip>
            <DocTab aria-label="8.6">
              <svg width="24" height="20" viewBox="0 0 24 20" fill="none">
                <path d="M4 6c4-4 6 3 10 0s5-2 8-1M4 10c4-4 6 3 10 0s5-2 8-1M8 15c3-3 5 2 8 0s3-2 6-1" stroke="#cfe6f2" strokeWidth="1.500" />
              </svg>
            </DocTab>
          </DocStrip>
          <Viewport><Scene /></Viewport>
          <TabStrip $h={23}>
            <PaneTab $w={124} $active>3D</PaneTab>
            <PaneTab $w={125}>Schematic</PaneTab>
            <TabRule />
          </TabStrip>
          <HSplit />
          <Docks>
            <Dock>
              <PaneHeader><span>Result Navigator</span><CloseButton aria-label="Close results"><CloseX /></CloseButton></PaneHeader>
              <ResultBox>
                <ResultTable>
                  <thead>
                    <tr>
                      <th aria-label="Filter">
                        <Icon><path d="M1 1h15l-5 7v9l-4-2V8z" fill="url(#gLight)" stroke="#777" strokeWidth="1.500" /></Icon>
                      </th>
                      <th>
                        3D Run ID
                        <SortMark width="10" height="8" viewBox="0 0 10 8" fill="none"><path d="M1 7l4-5 4 5" stroke="#777" strokeWidth="1.500" /></SortMark>
                      </th>
                    </tr>
                  </thead>
                  <tbody>
                    <tr>
                      <td>
                        <svg width="16" height="12" viewBox="0 0 16 12"><path d="M1 6h5M7 2v8M14 2v8M7 5h7M7 8h7" stroke="#8a8a8e" strokeWidth="1.800" /></svg>
                      </td>
                      <td>0: Current Run</td>
                    </tr>
                  </tbody>
                </ResultTable>
              </ResultBox>
              <TabStrip $h={25}>
                <TabRule />
                <PaneTab $w={134}>Parameter List</PaneTab>
                <PaneTab $w={149} $active>Result Navigator</PaneTab>
              </TabStrip>
            </Dock>
            <Dock>
              <PaneHeader><span>Messages</span><CloseButton $tint aria-label="Close messages"><CloseX /></CloseButton></PaneHeader>
              <MessageTools>
                <button aria-label="Errors"><Icon><circle cx="9" cy="9" r="8" fill="#828386" /><path d="M5.500 5.500l7 7M12.500 5.500l-7 7" stroke="#fff" strokeWidth="2.500" /></Icon></button>
                <button aria-label="Warnings"><Icon><path d="M9 2l8 14H1z" fill="#c0c1c4" stroke="#aaa" /><path d="M9 6v5M9 13v2" stroke="#555" strokeWidth="2" /></Icon></button>
                <button aria-label="Information"><Icon><circle cx="9" cy="9" r="7.500" fill="#f6f6f6" stroke="#b0b0b3" strokeWidth="1.500" /><path d="M9 4v2M7.500 8H9v5M7 13.500h4" stroke="#555" strokeWidth="1.800" /></Icon></button>
                <button aria-label="Clear list"><Icon s={24} v={24}><path d="M6 4l7 9M13 4l-7 9" stroke="#888" strokeWidth="1.800" /><path d="M14 5h9M14 10h9M9 15h14" stroke="#666" strokeWidth="2.200" /></Icon></button>
              </MessageTools>
              <MessageBox />
              <TabStrip $h={26}>
                <PaneTab $w={90} $active>Messages</PaneTab>
                <PaneTab $w={90}>Progress</PaneTab>
                <TabRule />
              </TabStrip>
            </Dock>
          </Docks>
        </Center>
      </Workspace>

      <StatusBar>
        <span>Ready</span>
        <StatusTools>
          {["zoomBox", "pan", "rotate", "zoomDyn", "spin"].map((k) => (
            <StatusButton key={k} $active={k === "rotate"} aria-label={k}><Icon s={20}>{statusIcons[k]}</Icon></StatusButton>
          ))}
          <StatusRule />
          {["fit", "plane"].map((k) => (
            <StatusButton key={k} aria-label={k}><Icon s={20}>{statusIcons[k]}</Icon></StatusButton>
          ))}
          <StatusButton $w={43} aria-label="View direction"><Icon s={20}>{statusIcons.box}</Icon><Caret /></StatusButton>
          <StatusRule />
          <StatusButton $w={31} aria-label="Snap"><Icon s={20}>{statusIcons.raster}</Icon></StatusButton>
          <RasterText>Raster=2</RasterText>
        </StatusTools>
      </StatusBar>

      <Taskbar>
        <TaskButton $w={60} aria-label="Start"><Icon s={20}><path d="M0 3l8-1v8H0zM9 2l11-2v10H9zM0 11h8v8l-8-1zM9 11h11v9L9 19z" fill="#000" /></Icon></TaskButton>
        <TaskButton $w={60} aria-label="Search"><Icon s={20}><circle cx="10" cy="10" r="8.500" stroke="#000" strokeWidth="2.400" /></Icon></TaskButton>
        <TaskButton $w={62} aria-label="Task view"><Icon s={20}><path d="M1 0v4h11V0M1 20v-4h11v4M1 6.500h11v7H1zM18 0v5M18 11v9" stroke="#000" strokeWidth="1.300" /><path d="M17 6h3v3h-3z" fill="#000" /></Icon></TaskButton>
        <TaskButton $w={63} $open aria-label="Browser">
          <Icon s={30}>
            <circle cx="15" cy="15" r="13" fill="#e8e4ee" />
            <path d="M16 14C16 8 12 5 8 6c3-5 12-6 17-1 3 3 0 6-9 9z" fill="#8e3b9e" />
            <path d="M16 14c5-2 8-6 9-9 6 6 6 14 1 19-1-6-4-8-10-10z" fill="#dc4a2c" />
            <path d="M15 16c6 0 10 4 11 8-5 7-13 7-17 3 5-1 7-5 6-11z" fill="#daa424" />
            <path d="M14 16c1 6-1 11-5 11-6-1-9-7-8-12 3 4 8 5 13 1z" fill="#55ad4d" />
            <path d="M14 15C8 18 3 18 1 14 0 7 5 1 11 0 7 5 8 11 14 15z" fill="#4690c4" />
            <circle cx="15" cy="15" r="2.500" fill="#fff" />
          </Icon>
        </TaskButton>
        <TaskButton $w={61} $open aria-label="File Explorer">
          <Icon s={28}><path d="M0 3h12l2 3h-14z" fill="#d6a02b" /><path d="M1 5h26v20H1z" fill="#f6d899" /><path d="M0 10h28v16H0z" fill="#e6ac59" /><path d="M5 27V16h18v11h-5v-6h-8v6z" fill="#4692c8" /></Icon>
        </TaskButton>
        <TaskButton $w={63} $open aria-label="Acrobat">
          <Icon s={28}><path d="M1 1h26v26H1z" fill="#20191b" stroke="#b91810" strokeWidth="2" /><path d="M13 6c3 0 1 9-6 16-2-1 5-6 15-5 3 2-6 1-8-5-2-4-2-6-1-6z" stroke="#e6e0e0" strokeWidth="1.300" /></Icon>
        </TaskButton>
        <TaskButton $w={61} $open $active aria-label="CST Studio Suite">
          <Icon s={30}><path d="M1 1h28v28H1z" fill="#4f8fbe" stroke="#0d5a8b" strokeWidth="1.500" /><path d="M20 6H5v9h12v5M10 24h16V11H13" stroke="#fff" strokeWidth="3" /></Icon>
        </TaskButton>
        <Tray>
          <TrayButton $w={29} aria-label="Hidden icons"><Icon s={16}><path d="M1 12l7-7 7 7" stroke="#111" strokeWidth="1.500" /></Icon></TrayButton>
          <TrayButton $w={30} aria-label="Volume"><Icon s={18}><path d="M1 6h3l4-4v14l-4-4H1zM11 6l6 6M17 6l-6 6" stroke="#111" strokeWidth="1.300" /></Icon></TrayButton>
          <TrayButton $w={31} aria-label="Battery"><Icon s={20}><path d="M6 6.500h12v8H5V11M19 9v3M2 3v3M5 3v3M1 6h5v2H1zM3.500 8v5" stroke="#111" strokeWidth="1.300" /><path d="M7 8h10v5H7z" fill="#111" /></Icon></TrayButton>
          <TrayButton $w={30} aria-label="Network"><Icon s={18}><path d="M1 17C1 8 8 2 16 2M5 17c0-7 5-11 11-11M9 17c0-4 3-7 7-7" stroke="#333" strokeWidth="1.300" /><circle cx="14.500" cy="15.500" r="1.800" fill="#111" /></Icon></TrayButton>
          <TrayButton $w={27} aria-label="Input mode"><Icon s={18}><path d="M1 5h16v8H1zM5 7h3v4H5zM10 7h3v4h-3zM8 0h2v18H8z" stroke="#444" strokeWidth=".9" /></Icon></TrayButton>
          <TrayButton $w={44} aria-label="Sogou input"><SogouLogo s={20} /></TrayButton>
          <Clock>17:22<br />2020/8/12</Clock>
          <TrayButton $w={60} aria-label="Notifications">
            <svg width="32" height="32" viewBox="0 0 32 32">
              <path d="M1 1h20v16H8l-4 4v-4H1z" fill="#000" /><path d="M4 6h14M4 10h14M4 14h9" stroke="#fff" strokeWidth="1.500" />
              <circle cx="21" cy="21" r="10" fill="#d3d3d5" stroke="#8a8a8c" />
              <text x="21" y="26" textAnchor="middle" fontFamily="Open Sans" fontSize="14" fontWeight="600">1</text>
            </svg>
          </TrayButton>
          <DesktopEdge />
        </Tray>
      </Taskbar>

      <ImeBar>
        <ImeLogo><SogouLogo s={34} /></ImeLogo>
        <ImeStrip>
          <ImeButton aria-label="Chinese"><Icon><path d="M2 5h14v7H2zM9 1v16" stroke="#1673c0" strokeWidth="2.300" /></Icon></ImeButton>
          <ImeButton aria-label="Punctuation"><Icon><circle cx="5" cy="6" r="2" stroke="#1673c0" strokeWidth="1.500" /><path d="M13 10c3 1 2 5-1 7" stroke="#1673c0" strokeWidth="3" /></Icon></ImeButton>
          <ImeButton aria-label="Emoji"><Icon s={20}><circle cx="10" cy="10" r="8.500" stroke="#1673c0" strokeWidth="2" /><path d="M7 6v3M13 6v3M5 11c2 5 8 5 10 0" stroke="#1673c0" strokeWidth="1.800" /></Icon></ImeButton>
          <ImeButton aria-label="Voice"><Icon><rect x="6" y="0" width="6" height="11" rx="3" fill="#1673c0" /><path d="M2 7c0 9 14 9 14 0M9 13v4M5 17h8" stroke="#1673c0" strokeWidth="1.800" /></Icon></ImeButton>
          <ImeButton aria-label="Keyboard"><Icon s={20}><rect x="0" y="3" width="20" height="14" rx="1" fill="#1673c0" /><path d="M3 7h14M3 10h14" stroke="#fff" strokeWidth="1.600" strokeDasharray="2 1" /><path d="M5 14h10" stroke="#fff" strokeWidth="1.600" /></Icon></ImeButton>
          <ImeButton aria-label="Account"><Icon><circle cx="7" cy="4" r="4" fill="#b4bdd0" /><path d="M0 17c0-11 14-11 14-3v3z" fill="#b4bdd0" /><path d="M10 11h7v6h-7z" fill="#e3e7ef" stroke="#9aa5bd" /></Icon></ImeButton>
          <ImeButton aria-label="Skin"><Icon><path d="M5 1c2 3 6 3 8 0l5 3-2 5-2-1v9H4V8L2 9 0 4z" fill="#1673c0" /></Icon></ImeButton>
          <ImeButton aria-label="Toolbox"><Icon><path d="M1 1h7v7H1zM1 10h7v7H1zM10 10h7v7h-7z" fill="#1673c0" /><rect x="11" y="2" width="5" height="5" rx="1" stroke="#1673c0" strokeWidth="2" /></Icon></ImeButton>
        </ImeStrip>
      </ImeBar>

      <QrCard>
        <svg width="91" height="91" viewBox="0 0 37 37" role="img" aria-label="QR code">
          <path d={qrPath} fill="#000" shapeRendering="crispEdges" />
          <g fill="none" stroke="#4784b8" strokeWidth=".7">
            <path d="M15.500 17c-1 1-1 3 0 4M21.500 17c1 1 1 3 0 4M17 17.500c-.7 1-.7 2 0 3M20 17.500c.7 1 .7 2 0 3M15 15.500h7" />
            <path d="M18.500 18v4M17 22h3" stroke="#a8694a" />
          </g>
        </svg>
        微信关注我们
      </QrCard>

      <BoundaryDialog />
    </Page>
  );
}
